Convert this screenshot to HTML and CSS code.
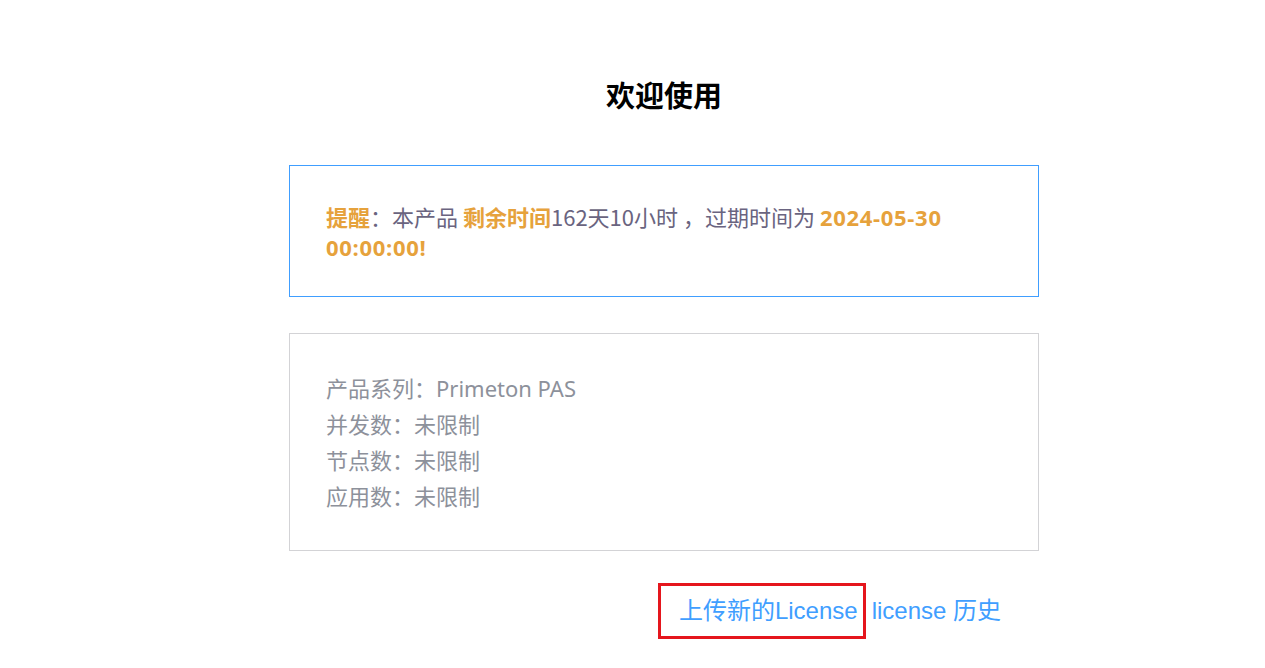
FILE: index.html
```html
<!DOCTYPE html>
<html lang="zh">
<head>
<meta charset="utf-8">
<title>欢迎使用</title>
<link rel="stylesheet" href="styles.css">
</head>
<body>
<main class="wrap">
  <h1 class="title">欢迎使用</h1>
  <section class="notice">
    <p><span class="hl">提醒</span>：本产品 <span class="hl">剩余时间</span>162天10小时 ，过期时间为 <span class="hl date">2024-05-30 00:00:00!</span></p>
  </section>
  <section class="info">
    <div class="row">产品系列：Primeton PAS</div>
    <div class="row">并发数：未限制</div>
    <div class="row">节点数：未限制</div>
    <div class="row">应用数：未限制</div>
  </section>
  <nav class="links">
    <a class="link upload" href="#">上传新的License</a>
    <a class="link" href="#">license 历史</a>
  </nav>
</main>
</body>
</html>
```
FILE: styles.css
```css
html, body {
  margin: 0;
  padding: 0;
  background: #fff;
}
body {
  font-family: "Noto Sans", "Noto Sans CJK SC", sans-serif;
}
.wrap {
  width: 750px;
  margin-left: 289px;
  padding-top: 75px;
}
.title {
  margin: 0;
  text-align: center;
  font-size: 29px;
  line-height: 38px;
  font-weight: 700;
  color: #000;
  font-family: "Noto Sans CJK SC", sans-serif;
}
.notice {
  margin-top: 52px;
  border: 1px solid #409eff;
  padding: 36px 36px;
  height: 58px;
}
.notice p {
  margin: 0;
  font-size: 22px;
  line-height: 29px;
  color: #6a6480;
  width: 630px;
  font-family: "Noto Sans CJK SC", sans-serif;
}
.hl {
  color: #e6a23c;
  font-weight: 700;
}
.date {
  font-family: "Open Sans", "Noto Sans CJK SC", sans-serif;
  letter-spacing: 0.7px;
}
.info {
  margin-top: 36px;
  border: 1px solid #d3d3d6;
  padding: 36px;
  color: #8d919b;
  font-size: 22px;
  line-height: 36px;
}
.links {
  display: flex;
  justify-content: flex-end;
  align-items: center;
  gap: 6px;
  margin-top: 32px;
  padding-right: 38px;
}
.link {
  color: #409eff;
  text-decoration: none;
  font-size: 24px;
  line-height: 30px;
  font-family: "Liberation Sans", "Noto Sans CJK SC", sans-serif;
}
.upload {
  border: 3px solid #e5161d;
  padding: 10px 5px 10px 18px;
}
```
